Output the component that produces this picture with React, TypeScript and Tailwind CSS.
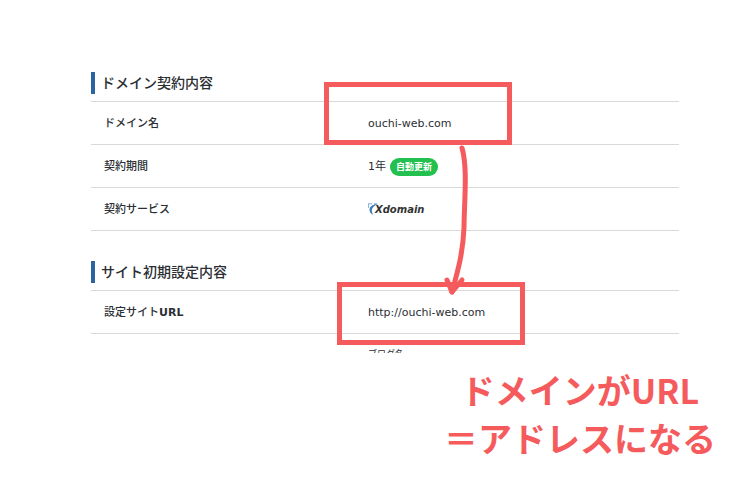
import type { ReactNode } from "react";

function Section({ title, children }: { title: string; children: ReactNode }) {
  return (
    <section>
      <h2 className="mb-[7px] h-[22px] border-l-4 border-[#2c64a0] pl-[6px] text-sm leading-[22px] font-medium">
        {title}
      </h2>
      <table className="w-full border-collapse text-left">
        <tbody>{children}</tbody>
      </table>
    </section>
  );
}

function Row({ label, children }: { label: ReactNode; children: ReactNode }) {
  return (
    <tr className="h-[43px] border-y border-[#d9d9d9]">
      <th scope="row" className="w-[277px] pt-[2px] pl-[13px] font-medium">
        {label}
      </th>
      <td className="pt-[2px]">{children}</td>
    </tr>
  );
}

function XdomainLogo() {
  return (
    <span className="flex items-center">
      <svg viewBox="0 0 12 14" className="h-[14px] w-[12px]" fill="none" aria-hidden="true">
        <path d="M0 .8h4M.6 1v4M6 .8h3" stroke="#7fb0da" strokeWidth="1" />
        <path d="M10 1.2C4.500 .8 1.500 3.500 1.500 7c0 2 1.500 4 4 5C3 8.500 2.500 3.800 10 1.200Z" fill="#3f7db8" />
      </svg>
      <span className="-ml-[5px] text-[10px] leading-[14px] font-bold text-[#333] italic">
        Xdomain
      </span>
    </span>
  );
}

export default function App() {
  return (
    <main className="min-h-screen bg-white font-['DejaVu_Sans','Noto_Sans_CJK_JP',sans-serif] text-[11px] text-[#2b2f34]">
      <div className="relative pt-[72px] pr-[71px] pl-[91px]">
        <div className="flex h-[281px] flex-col gap-[30px] overflow-hidden">
          <Section title="ドメイン契約内容">
            <Row label="ドメイン名">ouchi-web.com</Row>
            <Row label="契約期間">
              <span className="flex items-center gap-1">
                1年
                <span className="rounded-full bg-[#22c04f] px-[6px] text-[9px] leading-[18px] font-bold text-white">
                  自動更新
                </span>
              </span>
            </Row>
            <Row label="契約サービス">
              <XdomainLogo />
            </Row>
          </Section>
          <Section title="サイト初期設定内容">
            <Row
              label={
                <>
                  設定サイト<span className="font-bold">URL</span>
                </>
              }
            >
              http://ouchi-web.com
            </Row>
            <tr>
              <td />
              <td className="pt-[12px] text-[9px] leading-[16px]">ブログ名</td>
            </tr>
          </Section>
        </div>
        <div className="absolute top-[82px] left-[324px] h-[63px] w-[188px] border-[5px] border-[#f55b5d]" />
        <div className="absolute top-[282px] left-[337px] h-[63px] w-[188px] border-[5px] border-[#f55b5d]" />
        <svg
          viewBox="0 0 30 156"
          className="absolute top-[143px] left-[441px] h-[156px] w-[30px]"
          fill="none"
          stroke="#f55b5d"
          strokeLinecap="round"
          strokeLinejoin="round"
          aria-hidden="true"
        >
          <path d="M21 5C27 25 23 62 23 85C22 108 18 124 11 149" strokeWidth="5" />
          <path d="M6 137L11 149L21 137" strokeWidth="5" />
        </svg>
      </div>
      <p className="mt-[13px] mr-[34px] ml-auto w-fit text-center font-['Noto_Sans_CJK_JP',sans-serif] text-[34px] leading-[48px] font-bold text-[#f55b5d]">
        ドメインがURL
        <br />
        ＝アドレスになる
      </p>
    </main>
  );
}
